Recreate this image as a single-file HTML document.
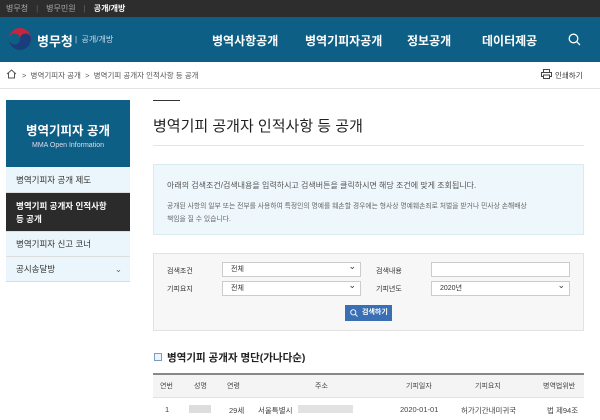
<!DOCTYPE html>
<html><head><meta charset="utf-8"><style>
*{margin:0;padding:0;box-sizing:border-box}
body{width:600px;height:420px;overflow:hidden;background:#fff;font-family:"Liberation Sans","Noto Sans CJK KR",sans-serif;position:relative;color:#333}
.a{position:absolute}
.top{left:0;top:0;width:600px;height:17px;background:#2d2d2d;font-size:8px;color:#aaa;line-height:17px}
.hd{left:0;top:17px;width:600px;height:45px;background:#0e5f85;color:#fff}
.nav{font-size:12px;font-weight:bold;top:15px}
.bc{font-size:7.5px;color:#555}
.sb{left:6px;width:124px;font-size:8.5px;padding-left:10px;border-bottom:1px solid #ddd;background:#eaf6fb;color:#333}
.lab{font-size:7px;color:#333}
.sel{background:#fff;border:1px solid #ccc;height:15px;font-size:7px;line-height:13px;padding-left:8px}
.sel::after{content:"⌄";position:absolute;right:4px;top:-3px;font-size:9px}
.th{font-size:7px;color:#444;top:381px}
.td{font-size:7.5px;color:#444;top:405px}
</style></head><body>
<div class="a top"><span style="margin-left:6px">병무청</span><span style="margin:0 8px;color:#666">|</span><span>병무민원</span><span style="margin:0 8px;color:#666">|</span><b style="color:#fff">공개/개방</b></div>
<div class="a hd">
 <svg class="a" style="left:7px;top:9px" width="26" height="26" viewBox="0 0 26 26"><path d="M2 13a11 11 0 0 1 22 0a5.5 5.5 0 0 1-11 0a5.5 5.5 0 0 0-11 0z" fill="#c8253c"/><path d="M2 13a5.5 5.5 0 0 0 11 0a5.5 5.5 0 0 1 11 0a11 11 0 0 1-22 0z" fill="#1a3d7c"/></svg>
 <div class="a" style="left:37px;top:14px;font-size:13px;font-weight:bold">병무청</div>
 <div class="a" style="left:75px;top:17px;font-size:8px;color:#cde">|&nbsp; 공개/개방</div>
 <div class="a nav" style="left:212px">병역사항공개</div>
 <div class="a nav" style="left:305px">병역기피자공개</div>
 <div class="a nav" style="left:407px">정보공개</div>
 <div class="a nav" style="left:482px">데이터제공</div>
 <svg class="a" style="left:568px;top:16px" width="13" height="13" viewBox="0 0 13 13"><circle cx="5.5" cy="5.5" r="4.3" fill="none" stroke="#fff" stroke-width="1.3"/><path d="M8.7 8.7L12 12" stroke="#fff" stroke-width="1.3"/></svg>
</div>
<svg class="a" style="left:6px;top:69px" width="11" height="10" viewBox="0 0 11 10"><path d="M1 5L5.5 1L10 5M2.5 4v5h6V4" fill="none" stroke="#555" stroke-width="1"/></svg>
<div class="a bc" style="left:22px;top:70px">&gt;&nbsp; 병역기피자 공개 &nbsp;&gt;&nbsp; 병역기피 공개자 인적사항 등 공개</div>
<svg class="a" style="left:541px;top:69px" width="11" height="10" viewBox="0 0 11 10"><rect x="2.5" y="0.5" width="6" height="3" fill="none" stroke="#444"/><rect x="0.5" y="3.5" width="10" height="4" fill="none" stroke="#444"/><rect x="2.5" y="6" width="6" height="3.5" fill="#fff" stroke="#444"/></svg>
<div class="a bc" style="left:555px;top:70px;color:#333">인쇄하기</div>
<div class="a" style="left:0;top:88px;width:600px;height:1px;background:#e3e3e3"></div>
<div class="a" style="left:6px;top:100px;width:124px;height:67px;background:#0e5f85;color:#fff;text-align:center">
 <div style="font-size:12.5px;font-weight:bold;margin-top:20px">병역기피자 공개</div>
 <div style="font-size:7px;margin-top:3px;color:#dde">MMA Open Information</div>
</div>
<div class="a sb" style="top:167px;height:26px;line-height:26px">병역기피자 공개 제도</div>
<div class="a sb" style="top:193px;height:39px;background:#2b2b2b;color:#fff;padding-top:7px;line-height:13px;font-weight:bold">병역기피 공개자 인적사항<br>등 공개</div>
<div class="a sb" style="top:232px;height:25px;line-height:25px">병역기피자 신고 코너</div>
<div class="a sb" style="top:257px;height:25px;line-height:25px">공시송달방<span style="position:absolute;right:8px;color:#666">⌄</span></div>
<div class="a" style="left:153px;top:100px;width:27px;height:1px;background:#333"></div>
<div class="a" style="left:153px;top:115px;font-size:15px;color:#222">병역기피 공개자 인적사항 등 공개</div>
<div class="a" style="left:153px;top:145px;width:431px;height:1px;background:#e5e5e5"></div>
<div class="a" style="left:153px;top:164px;width:431px;height:71px;background:#eef7fb;border:1px solid #dbe9f0"></div>
<div class="a" style="left:167px;top:180px;font-size:8px;color:#555">아래의 검색조건/검색내용을 입력하시고 검색버튼을 클릭하시면 해당 조건에 맞게 조회됩니다.</div>
<div class="a" style="left:167px;top:200px;font-size:6.8px;color:#666;line-height:13px;width:410px">공개된 사항의 일부 또는 전부를 사용하여 특정인의 명예를 훼손할 경우에는 형사상 명예훼손죄로 처벌을 받거나 민사상 손해배상<br>책임을 질 수 있습니다.</div>
<div class="a" style="left:153px;top:253px;width:431px;height:78px;background:#f7f7f7;border:1px solid #e2e2e2"></div>
<div class="a lab" style="left:167px;top:266px">검색조건</div>
<div class="a lab" style="left:167px;top:284px">기피요지</div>
<div class="a lab" style="left:376px;top:266px">검색내용</div>
<div class="a lab" style="left:376px;top:284px">기피년도</div>
<div class="a sel" style="left:222px;top:262px;width:139px">전체</div>
<div class="a sel" style="left:222px;top:281px;width:139px">전체</div>
<div class="a" style="left:431px;top:262px;width:139px;height:15px;background:#fff;border:1px solid #ccc"></div>
<div class="a sel" style="left:431px;top:281px;width:139px">2020년</div>
<div class="a" style="left:345px;top:305px;width:47px;height:16px;background:#3a6fb5;color:#fff;font-size:7px;line-height:16px;font-weight:bold;padding-left:17px">검색하기</div>
<svg class="a" style="left:350px;top:309px" width="8" height="8" viewBox="0 0 8 8"><circle cx="3.3" cy="3.3" r="2.6" fill="none" stroke="#fff" stroke-width="0.9"/><path d="M5.2 5.2L7.5 7.5" stroke="#fff" stroke-width="0.9"/></svg>
<div class="a" style="left:154px;top:353px;width:8px;height:8px;border:1px solid #7a9cc4;background:#eef3fa"></div>
<div class="a" style="left:167px;top:350px;font-size:10.5px;font-weight:bold;color:#222">병역기피 공개자 명단(가나다순)</div>
<div class="a" style="left:153px;top:373px;width:431px;height:25px;background:#f4f4f4;border-top:2px solid #888;border-bottom:1px solid #e2e2e2"></div>
<div class="a th" style="left:160px">연번</div><div class="a th" style="left:194px">성명</div><div class="a th" style="left:227px">연령</div><div class="a th" style="left:315px">주소</div><div class="a th" style="left:406px">기피일자</div><div class="a th" style="left:475px">기피요지</div><div class="a th" style="left:543px">병역법위반</div>
<div class="a td" style="left:165px">1</div>
<div class="a" style="left:189px;top:405px;width:22px;height:8px;background:#ddd"></div>
<div class="a td" style="left:229px">29세</div>
<div class="a td" style="left:258px">서울특별시</div>
<div class="a" style="left:298px;top:405px;width:55px;height:8px;background:#e2e2e2"></div>
<div class="a td" style="left:400px">2020-01-01</div>
<div class="a td" style="left:461px">허가기간내미귀국</div>
<div class="a td" style="left:547px">법 제94조</div>
</body></html>
